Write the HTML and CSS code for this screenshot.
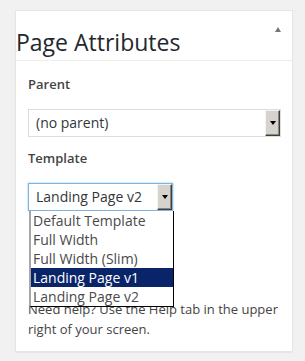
FILE: index.html
```html
<!DOCTYPE html>
<html lang="en">
<head>
    <meta charset="UTF-8">
    <title>Page Attributes</title>
    <link rel="stylesheet" href="styles.css">
</head>
<body>

    <div class="postbox">
        <div class="postbox-header">
            <h2>Page Attributes</h2>
            <span class="toggle"></span>
        </div>

        <div class="inside">
            <p class="label">Parent</p>
            <div class="select wide">
                <span class="select-value">(no parent)</span>
                <span class="select-button"><span class="arrow"></span></span>
            </div>

            <p class="label">Template</p>
            <div class="select-wrap">
                <div class="select narrow focused">
                    <span class="select-value">Landing Page v2</span>
                    <span class="select-button"><span class="arrow"></span></span>
                </div>
                <ul class="options">
                    <li>Default Template</li>
                    <li>Full Width</li>
                    <li>Full Width (Slim)</li>
                    <li class="selected">Landing Page v1</li>
                    <li>Landing Page v2</li>
                </ul>
            </div>

            <p class="help">Need help? Use the Help tab in the upper right of your screen.</p>
        </div>
    </div>

</body>
</html>
```

FILE: styles.css
```css
body {
    margin: 0;
    padding: 10px 12px 10px 15px;
    background: #f1f1f1;
    font-family: 'Open Sans', sans-serif;
    color: #444;
}

.postbox {
    width: 278px;
    box-sizing: border-box;
    background: #fff;
    border: 1px solid #e5e5e5;
    box-shadow: 0 1px 1px rgba(0, 0, 0, 0.04);
}

.postbox-header {
    display: flex;
    justify-content: space-between;
    align-items: flex-start;
    height: 50px;
    box-sizing: border-box;
    border-bottom: 1px solid #eee;
}

.postbox-header h2 {
    margin: 0;
    padding-top: 16px;
    font-size: 23px;
    line-height: 30px;
    font-weight: 400;
    color: #23282d;
}

.toggle {
    width: 0;
    height: 0;
    margin: 16px 11px 0 0;
    border-left: 3.5px solid transparent;
    border-right: 3.5px solid transparent;
    border-bottom: 5px solid #72777c;
}

.inside {
    padding: 14px 11px 12px 12px;
}

.label {
    margin: 0;
    font-size: 13px;
    line-height: 18px;
    font-weight: 600;
    color: #444;
}

.select {
    display: flex;
    height: 28px;
    box-sizing: border-box;
    margin-top: 16px;
    margin-bottom: 12px;
    border: 1px solid #ddd;
    background: #fff;
}

.select.wide {
    width: 253px;
}

.select.narrow {
    width: 145px;
    margin-bottom: 0;
}

.select.focused {
    border-color: #7eb2e0;
    box-shadow: 0 0 2px rgba(30, 140, 190, 0.5);
}

.select-value {
    flex: 1;
    padding-left: 7px;
    font-size: 14px;
    line-height: 26px;
    color: #32373c;
    white-space: nowrap;
}

.select-button {
    display: flex;
    justify-content: center;
    align-items: center;
    width: 15px;
    box-sizing: border-box;
    background: #d6d3ce;
    border-top: 1px solid #f4f3f0;
    border-left: 1px solid #f4f3f0;
    border-right: 1px solid #404040;
    border-bottom: 1px solid #404040;
    box-shadow: inset -1px -1px 0 #88867f;
}

.arrow {
    width: 0;
    height: 0;
    border-left: 3.5px solid transparent;
    border-right: 3.5px solid transparent;
    border-top: 4px solid #000;
}

.select-wrap {
    position: relative;
}

.options {
    position: absolute;
    top: 28px;
    left: 1px;
    z-index: 2;
    width: 145px;
    box-sizing: border-box;
    margin: 0;
    padding: 0;
    list-style: none;
    background: #fff;
    border-left: 2px solid #a7a7a7;
    border-right: 1px solid #000;
    border-bottom: 1px solid #000;
}

.options li {
    padding-left: 2px;
    font-size: 14px;
    line-height: 19px;
    color: #4a4a4a;
    white-space: nowrap;
}

.options li.selected {
    background: #0a246a;
    color: #fff;
}

.help {
    margin: 88px 0 0;
    font-size: 13px;
    line-height: 20px;
    color: #444;
}
```
